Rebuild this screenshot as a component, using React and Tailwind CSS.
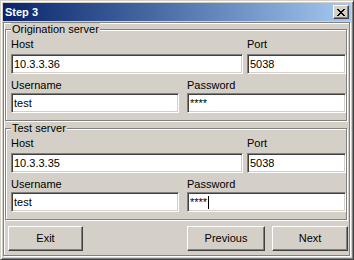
import React from "react";

const FONT = { fontFamily: '"Liberation Sans", Arial, sans-serif' };

function Input({ value, w, caret }) {
  return (
    <div
      className={`${w} h-[20px] bg-white border border-t-[#808080] border-l-[#808080] border-b-white border-r-white shadow-[inset_1px_1px_0_#404040,inset_-1px_-1px_0_#d4d0c8] flex items-center pl-[2px] text-[11px] text-black leading-none`}
    >
      <span>{value}</span>
      {caret && <span className="inline-block w-px h-[13px] bg-black ml-px" />}
    </div>
  );
}

function Label({ children, w }) {
  return <div className={`${w} h-[13px] text-[11px] leading-[13px] text-black`}>{children}</div>;
}

function Group({ title, host, port, user, pass, caret, className }) {
  return (
    <div
      className={`relative ml-px w-[342px] h-[92px] border border-[#808080] shadow-[inset_1px_1px_0_#fff,1px_1px_0_#fff] pt-[8px] pl-[5px] ${className}`}
    >
      <div className="absolute left-[5px] top-[-7px] px-px bg-[#d4d0c8] text-[11px] leading-[13px] text-black">
        {title}
      </div>
      <div className="flex">
        <div className="flex flex-col w-[236px]">
          <Label w="w-[232px]">Host</Label>
          <div className="mt-[3px]">
            <Input value={host} w="w-[232px]" />
          </div>
        </div>
        <div className="flex flex-col">
          <Label w="w-[99px]">Port</Label>
          <div className="mt-[3px]">
            <Input value={port} w="w-[99px]" />
          </div>
        </div>
      </div>
      <div className="flex mt-[5px]">
        <div className="flex flex-col w-[176px]">
          <Label w="w-[168px]">Username</Label>
          <div className="mt-[1px]">
            <Input value={user} w="w-[168px]" />
          </div>
        </div>
        <div className="flex flex-col">
          <Label w="w-[159px]">Password</Label>
          <div className="mt-[1px]">
            <Input value={pass} w="w-[159px]" caret={caret} />
          </div>
        </div>
      </div>
    </div>
  );
}

function Button({ children, w }) {
  return (
    <div
      className={`${w} h-[25px] bg-[#d4d0c8] border border-t-white border-l-white border-r-[#404040] border-b-[#404040] shadow-[inset_-1px_-1px_0_#808080] flex items-center justify-center text-[11px] text-black`}
    >
      {children}
    </div>
  );
}

export default function App() {
  return (
    <div
      style={FONT}
      className="w-[354px] h-[260px] bg-[#d4d0c8] border border-t-[#d4d0c8] border-l-[#d4d0c8] border-r-[#404040] border-b-[#404040] shadow-[inset_1px_1px_0_#fff,inset_-1px_-1px_0_#808080] p-[2px] flex flex-col"
    >
      <div className="h-[18px] w-[348px] flex items-center justify-between bg-gradient-to-r from-[#0a246a] to-[#a6caf0] pl-[2px] pr-[2px]">
        <span className="text-white font-bold text-[11px] leading-none">Step 3</span>
        <div className="w-[16px] h-[14px] bg-[#d4d0c8] border border-t-white border-l-white border-r-[#404040] border-b-[#404040] shadow-[inset_-1px_-1px_0_#808080] flex items-center justify-center">
          <svg width="8" height="7" viewBox="0 0 8 7" shapeRendering="crispEdges">
            <path
              d="M0 0h2v1H0zM6 0h2v1H6zM1 1h2v1H1zM5 1h2v1H5zM2 2h4v1H2zM3 3h2v1H3zM2 4h4v1H2zM1 5h2v1H1zM5 5h2v1H5zM0 6h2v1H0zM6 6h2v1H6z"
              fill="#000"
            />
          </svg>
        </div>
      </div>
      <div className="mt-px w-[347px] h-[234px] border border-[#808080] shadow-[inset_1px_1px_0_#fff,1px_1px_0_#fff] pt-[6px] flex flex-col">
        <Group
          title="Origination server"
          host="10.3.3.36"
          port="5038"
          user="test"
          pass="****"
        />
        <Group
          title="Test server"
          host="10.3.3.35"
          port="5038"
          user="test"
          pass="****"
          caret
          className="mt-[7px]"
        />
        <div className="flex mt-[6px] pl-[4px]">
          <Button w="w-[75px]">Exit</Button>
          <div className="w-[104px]" />
          <Button w="w-[78px]">Previous</Button>
          <div className="w-[7px]" />
          <Button w="w-[76px]">Next</Button>
        </div>
      </div>
    </div>
  );
}
